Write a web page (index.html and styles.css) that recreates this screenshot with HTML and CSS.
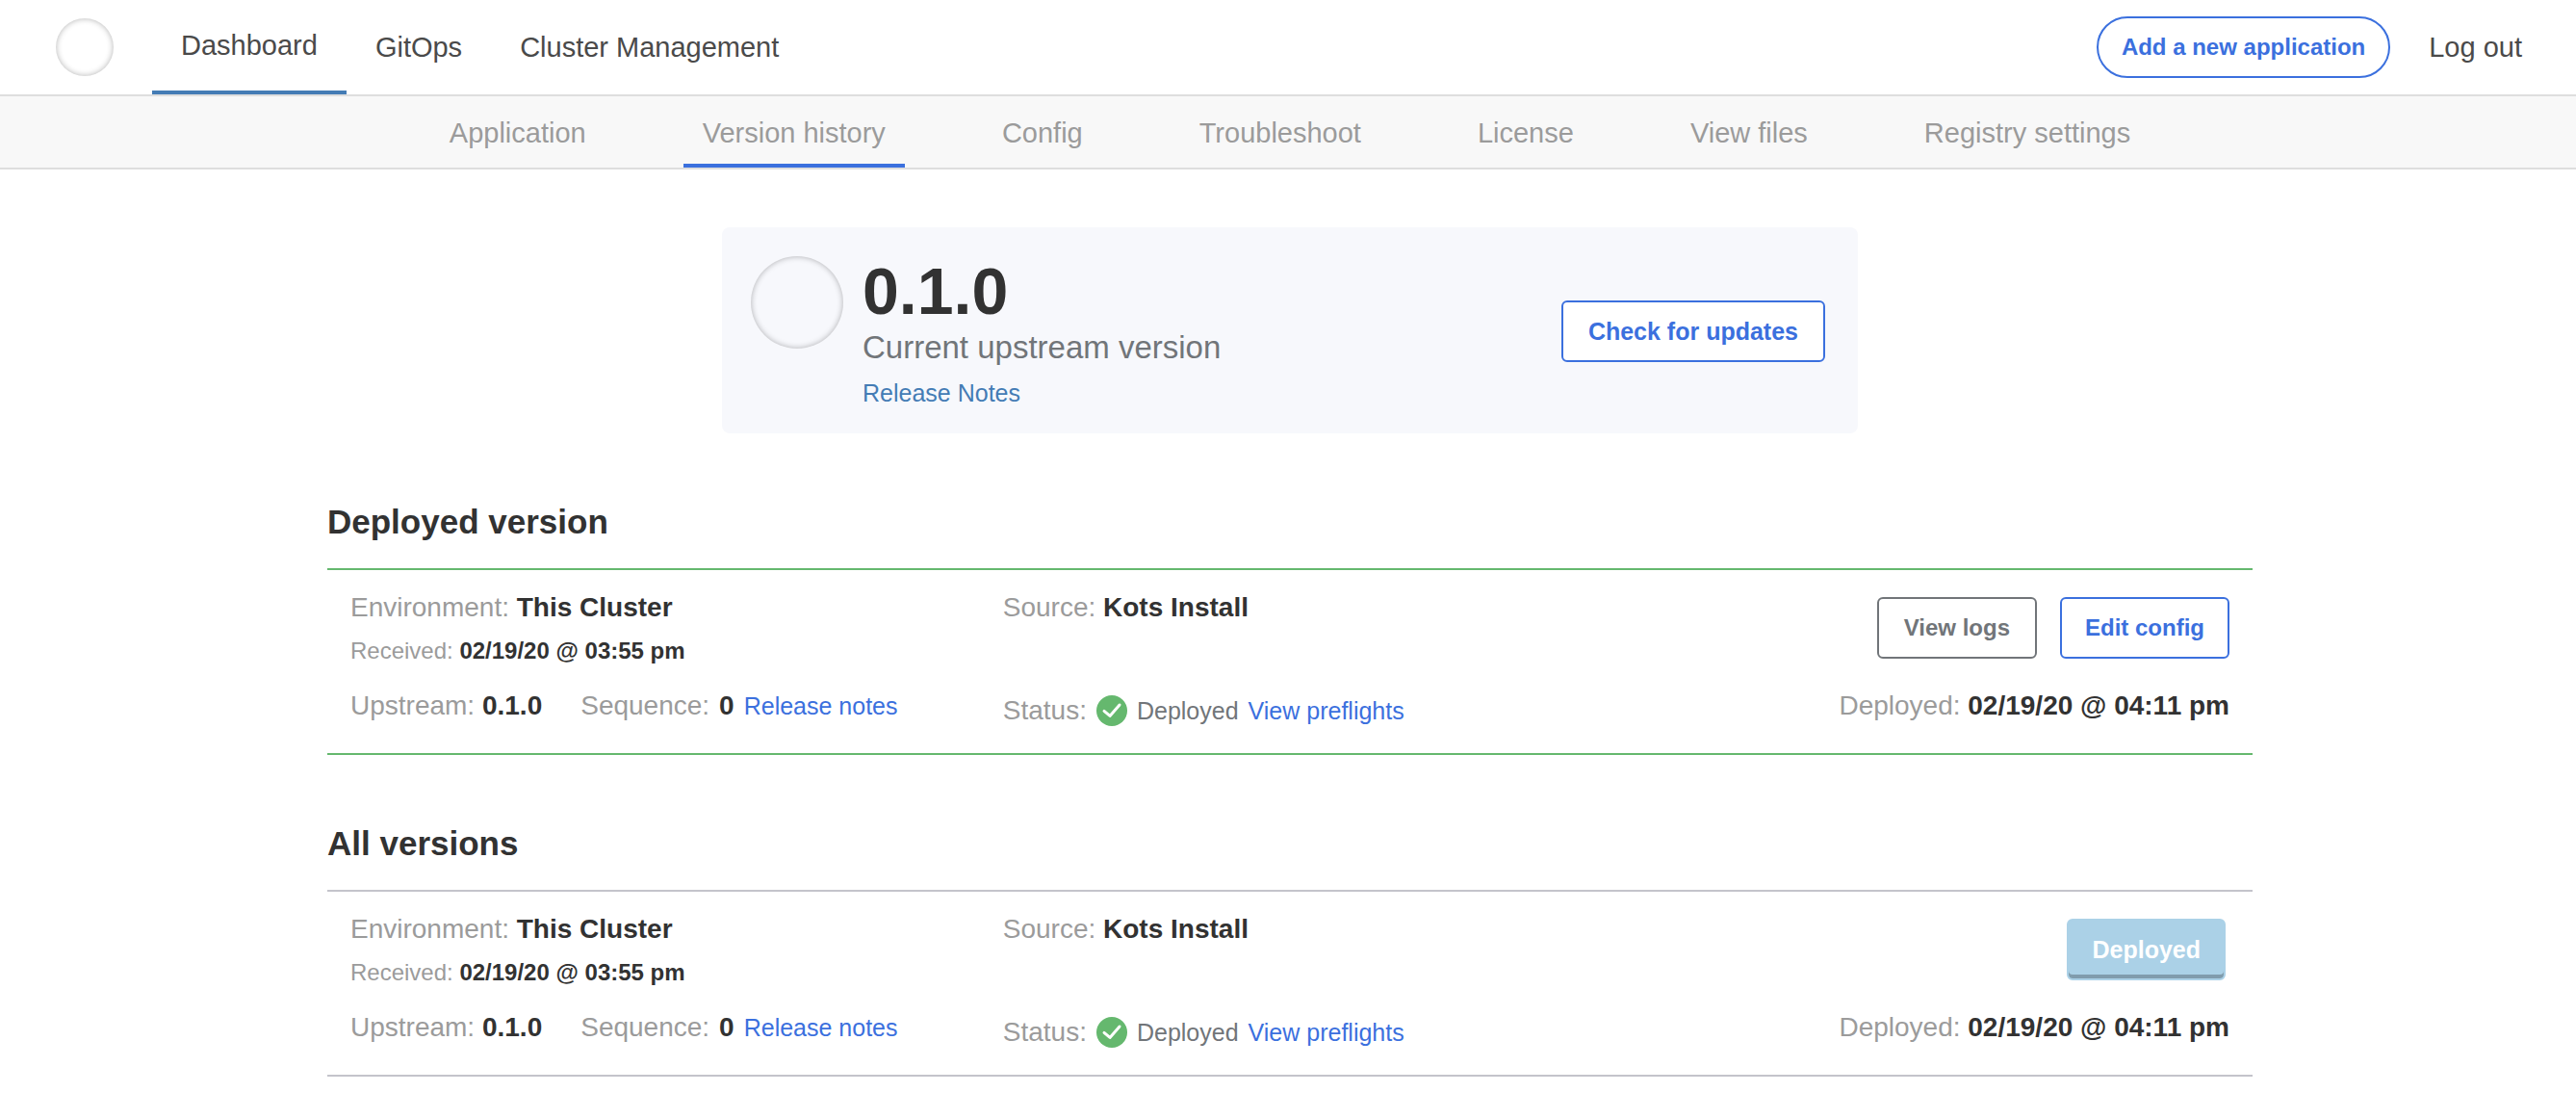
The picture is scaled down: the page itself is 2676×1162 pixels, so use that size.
FILE: index.html
```html
<!DOCTYPE html>
<html lang="en">
<head>
<meta charset="utf-8">
<meta name="viewport" content="width=device-width, initial-scale=1">
<title>Version history</title>
<link rel="stylesheet" href="styles.css">
</head>
<body>
<header class="topbar">
  <span class="avatar avatar-small"></span>
  <nav class="main-nav">
    <a class="main-link is-active" href="#">Dashboard</a>
    <a class="main-link" href="#">GitOps</a>
    <a class="main-link" href="#">Cluster Management</a>
  </nav>
  <div class="account">
    <button class="btn btn-pill" type="button">Add a new application</button>
    <a class="logout" href="#">Log out</a>
  </div>
</header>
<nav class="subnav">
  <a class="sub-link" href="#">Application</a>
  <a class="sub-link is-active" href="#">Version history</a>
  <a class="sub-link" href="#">Config</a>
  <a class="sub-link" href="#">Troubleshoot</a>
  <a class="sub-link" href="#">License</a>
  <a class="sub-link" href="#">View files</a>
  <a class="sub-link" href="#">Registry settings</a>
</nav>
<main class="page">
  <section class="current">
    <span class="avatar avatar-large"></span>
    <div class="current-info">
      <h1 class="current-version">0.1.0</h1>
      <p class="current-label">Current upstream version</p>
      <a class="notes-link" href="#">Release Notes</a>
    </div>
    <button class="btn btn-large" type="button">Check for updates</button>
  </section>

  <section class="versions">
    <h2 class="versions-title">Deployed version</h2>
    <article class="row row-deployed">
      <div class="details">
        <p class="field">Environment: <b>This Cluster</b></p>
        <p class="field field-small">Received: <b>02/19/20 @ 03:55 pm</b></p>
        <div class="sequence">
          <p class="field">Upstream: <b>0.1.0</b></p>
          <p class="field field-pair">Sequence: <b>0</b> <a class="link" href="#">Release notes</a></p>
        </div>
      </div>
      <div class="origin">
        <p class="field">Source: <b>Kots Install</b></p>
        <div class="status">
          <span class="field">Status:</span>
          <svg class="check" viewBox="0 0 32 32" aria-hidden="true"><circle cx="16" cy="16" r="16"/><path d="M8 16.4 L14 21.4 L24 10"/></svg>
          <span class="status-text">Deployed</span>
          <a class="link" href="#">View preflights</a>
        </div>
      </div>
      <div class="side">
        <div class="actions">
          <button class="btn btn-grey" type="button">View logs</button>
          <button class="btn" type="button">Edit config</button>
        </div>
        <p class="field">Deployed: <b>02/19/20 @ 04:11 pm</b></p>
      </div>
    </article>
  </section>

  <section class="versions">
    <h2 class="versions-title">All versions</h2>
    <article class="row">
      <div class="details">
        <p class="field">Environment: <b>This Cluster</b></p>
        <p class="field field-small">Received: <b>02/19/20 @ 03:55 pm</b></p>
        <div class="sequence">
          <p class="field">Upstream: <b>0.1.0</b></p>
          <p class="field field-pair">Sequence: <b>0</b> <a class="link" href="#">Release notes</a></p>
        </div>
      </div>
      <div class="origin">
        <p class="field">Source: <b>Kots Install</b></p>
        <div class="status">
          <span class="field">Status:</span>
          <svg class="check" viewBox="0 0 32 32" aria-hidden="true"><circle cx="16" cy="16" r="16"/><path d="M8 16.4 L14 21.4 L24 10"/></svg>
          <span class="status-text">Deployed</span>
          <a class="link" href="#">View preflights</a>
        </div>
      </div>
      <div class="side">
        <div class="actions actions-single">
          <button class="btn btn-solid" type="button">Deployed</button>
        </div>
        <p class="field">Deployed: <b>02/19/20 @ 04:11 pm</b></p>
      </div>
    </article>
  </section>
</main>
</body>
</html>
```
FILE: styles.css
```css
:root {
  --blue: #3b70de;
  --steel: #447cb5;
  --ink: #323232;
  --nav: #4a4a4a;
  --grey: #717579;
  --muted: #9b9b9b;
  --green: #65b86e;
  --line: #dedede;
}

* { box-sizing: border-box; }

body {
  margin: 0;
  background: #fff;
  color: var(--ink);
  font-family: "Liberation Sans", Arial, Helvetica, sans-serif;
  font-size: 28px;
}

h1, h2, p { margin: 0; }
a { text-decoration: none; }

.avatar {
  flex: none;
  border-radius: 50%;
  box-shadow: inset 0 0 6px rgba(0, 0, 0, 0.3);
}
.avatar-small { width: 60px; height: 60px; }
.avatar-large { width: 96px; height: 96px; }

/* Buttons */
.btn {
  height: 64px;
  padding: 0 24px;
  border: 2px solid var(--blue);
  border-radius: 6px;
  background: #fff;
  color: var(--blue);
  font-family: inherit;
  font-size: 24px;
  font-weight: 700;
  white-space: nowrap;
  cursor: pointer;
}
.btn-pill { border-radius: 32px; }
.btn-large {
  padding: 0 26px;
  font-size: 25px;
}
.btn-grey {
  padding: 0 26px;
  border-color: var(--grey);
  color: var(--grey);
}
.btn-solid {
  border-color: #abd1e7;
  background: #abd1e7;
  box-shadow: inset 0 -4px 0 rgba(0, 0, 0, 0.25);
  color: #fff;
  font-size: 25px;
}

/* Top bar */
.topbar {
  display: flex;
  align-items: center;
  height: 100px;
  padding: 2px 56px 0 58px;
  padding-top: 0;
  border-bottom: 2px solid var(--line);
}
.main-nav {
  display: flex;
  align-self: stretch;
  margin-left: 40px;
}
.main-link,
.logout {
  color: var(--nav);
  font-size: 29px;
}
.main-link {
  display: flex;
  align-items: center;
  padding: 0 30px;
}
.main-link.is-active { border-bottom: 4px solid var(--steel); }
.account {
  display: flex;
  align-items: center;
  gap: 40px;
  margin-left: auto;
}

/* Section tabs */
.subnav {
  display: flex;
  justify-content: center;
  gap: 81px;
  height: 76px;
  padding-left: 4px;
  border-bottom: 2px solid var(--line);
  background: #f8f8f8;
}
.sub-link {
  display: flex;
  align-items: center;
  padding: 6px 20px 0;
  border-bottom: 4px solid transparent;
  color: var(--muted);
  font-size: 29px;
}
.sub-link.is-active { border-color: var(--blue); }

/* Page */
.page {
  display: flex;
  flex-direction: column;
  gap: 72px;
  max-width: 2080px;
  margin: 0 auto;
  padding: 60px 38px 44px 42px;
}

.current {
  display: flex;
  align-items: flex-start;
  gap: 20px;
  width: 100%;
  max-width: 1180px;
  margin: 0 auto;
  padding: 30px 34px 28px 30px;
  border-radius: 8px;
  background: #f7f8fc;
}
.current-info { flex: 1; }
.current-version {
  font-size: 68px;
  line-height: 72px;
}
.current-label {
  margin-top: 4px;
  color: var(--grey);
  font-size: 33px;
  line-height: 38px;
}
.notes-link {
  display: block;
  margin-top: 14px;
  color: var(--steel);
  font-size: 25px;
  line-height: 28px;
}
.current .btn { align-self: center; }

.versions-title {
  margin-bottom: 28px;
  font-size: 35px;
  line-height: 40px;
}

/* Version row */
.row {
  display: grid;
  grid-template-columns: 25fr 25fr 22fr;
  padding: 22px 24px 27px;
  border-top: 2px solid #c4c4cb;
  border-bottom: 2px solid #c4c4cb;
}
.row-deployed { border-color: var(--green); }

.field {
  color: var(--muted);
  line-height: 34px;
}
.field b { color: var(--ink); }
.field-small {
  margin-top: 14px;
  font-size: 24px;
  line-height: 28px;
}
.sequence {
  display: flex;
  gap: 40px;
  margin-top: 26px;
}
.field-pair {
  display: flex;
  align-items: baseline;
  gap: 10px;
}
.link {
  color: var(--blue);
  font-size: 25px;
}

.status {
  display: flex;
  align-items: center;
  gap: 10px;
  margin-top: 73px;
}
.status-text {
  color: var(--grey);
  font-size: 25px;
}
.check {
  width: 32px;
  height: 32px;
}
.check circle { fill: var(--green); }
.check path {
  fill: none;
  stroke: #fff;
  stroke-width: 3;
  stroke-linecap: round;
  stroke-linejoin: round;
}

.side {
  display: flex;
  flex-direction: column;
  align-items: flex-end;
  gap: 32px;
  padding-top: 6px;
}
.actions {
  display: flex;
  gap: 24px;
}
.actions-single { padding-right: 4px; }
```
